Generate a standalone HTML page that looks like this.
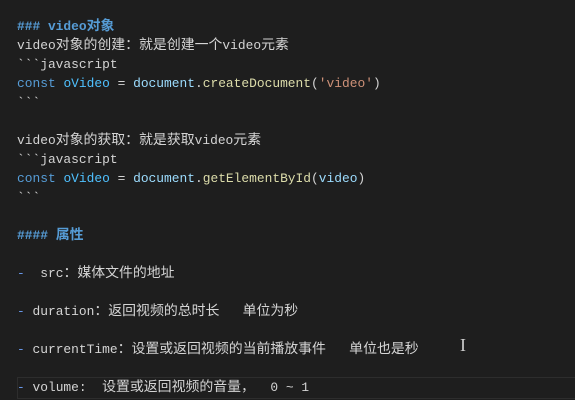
<!DOCTYPE html><html><head><style>
body{margin:0;background:#1e1e1e;width:575px;height:400px;overflow:hidden;}
.e{position:absolute;left:17px;top:17px;font-family:"Liberation Mono","Noto Sans CJK SC",monospace;font-size:12.9px;line-height:19px;color:#d4d4d4;white-space:pre;}
.c{font-size:13.9px;line-height:10px}
.h{color:#569cd6;font-weight:bold}.k{color:#569cd6}.v{color:#4fc1ff}.f{color:#dcdcaa}.s{color:#ce9178}.d{color:#9cdcfe}.g{color:#6796e6}
.cur{position:absolute;left:17px;top:377px;width:560px;height:20px;border:1px solid #2d2d2d;}
</style></head><body>
<div class="cur"></div>
<div class="e"><span class="h">### video<span class="c">对象</span></span>
video<span class="c">对象的创建：就是创建一个</span>video<span class="c">元素</span>
&#96;&#96;&#96;javascript
<span class="k">const</span> <span class="v">oVideo</span> = <span class="d">document</span>.<span class="f">createDocument</span>(<span class="s">'video'</span>)
&#96;&#96;&#96;

video<span class="c">对象的获取：就是获取</span>video<span class="c">元素</span>
&#96;&#96;&#96;javascript
<span class="k">const</span> <span class="v">oVideo</span> = <span class="d">document</span>.<span class="f">getElementById</span>(<span class="d">video</span>)
&#96;&#96;&#96;

<span class="h">#### <span class="c">属性</span></span>

<span class="g">-</span>  src<span class="c">：媒体文件的地址</span>

<span class="g">-</span> duration<span class="c">：返回视频的总时长</span>   <span class="c">单位为秒</span>

<span class="g">-</span> currentTime<span class="c">：设置或返回视频的当前播放事件</span>   <span class="c">单位也是秒</span>

<span class="g">-</span> volume:  <span class="c">设置或返回视频的音量，</span>  0 ~ 1</div>
<div style="position:absolute;left:460px;top:335px;color:#ccc;font:18px 'Liberation Serif',serif">I</div>
</body></html>
